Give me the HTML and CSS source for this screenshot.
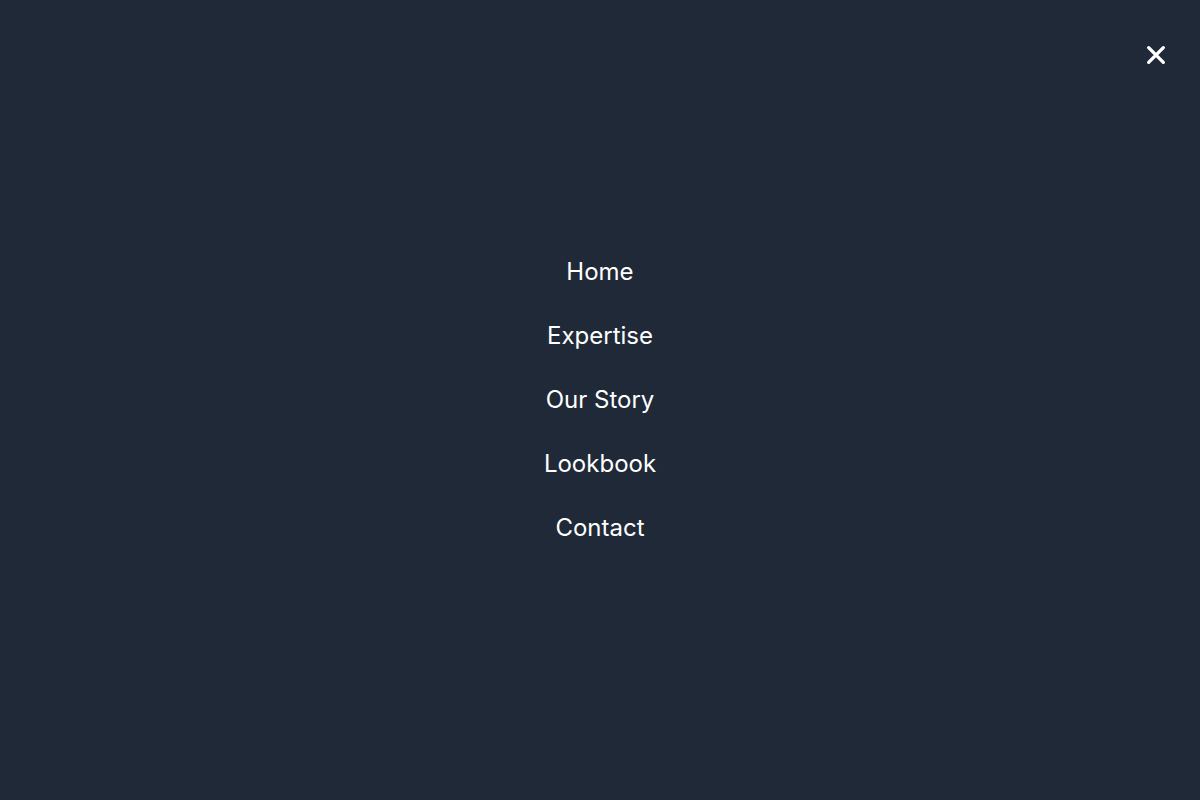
FILE: index.html
```html
<!DOCTYPE html>
<html lang="en">
<head>
<meta charset="utf-8">
<title>Menu</title>
<link rel="stylesheet" href="styles.css">
</head>
<body>
<div class="overlay">
  <button class="close" aria-label="Close menu">
    <svg viewBox="0 0 24 24" width="32" height="32" fill="none" stroke="currentColor" stroke-width="2.5" stroke-linecap="round" stroke-linejoin="round"><path d="M6.5 17.5L17.5 6.5M6.5 6.5l11 11"/></svg>
  </button>
  <nav class="menu">
    <a href="#">Home</a>
    <a href="#">Expertise</a>
    <a href="#">Our Story</a>
    <a href="#">Lookbook</a>
    <a href="#">Contact</a>
  </nav>
</div>
</body>
</html>
```
FILE: styles.css
```css
* { box-sizing: border-box; }
html, body { margin: 0; height: 100%; }
body {
  background: #1f2937;
  font-family: Inter, "Noto Sans", sans-serif;
  color: #fff;
}
.overlay {
  position: relative;
  height: 100vh;
  display: flex;
  align-items: center;
  justify-content: center;
}
.close {
  position: absolute;
  top: 39px;
  right: 28px;
  padding: 0;
  border: 0;
  background: none;
  color: #fff;
  cursor: pointer;
  display: block;
  line-height: 0;
}
.menu {
  display: flex;
  flex-direction: column;
  align-items: center;
  gap: 32px;
}
.menu a {
  color: #fff;
  text-decoration: none;
  font-size: 24px;
  line-height: 32px;
}
```
